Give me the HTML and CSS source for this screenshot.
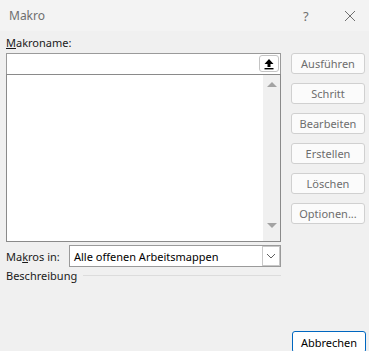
FILE: index.html
```html
<!DOCTYPE html>
<html lang="de">
	<head>
		<meta charset="UTF-8" />
		<title>Makro</title>
		<link rel="stylesheet" href="styles.css">
	</head>
	<body>
		<div class="dialog">
			<div class="titlebar">
				<span class="title">Makro</span>
				<span class="help">?</span>
				<span class="close">
					<svg width="12" height="12" viewBox="0 0 12 12"><path d="M1 1L11 11M11 1L1 11" stroke="#6f6f6f" stroke-width="1" fill="none"/></svg>
				</span>
			</div>
			<div class="main">
				<div class="left">
					<div class="label"><u>M</u>akroname:</div>
					<div class="namebox">
						<span class="pick">
							<svg width="12" height="12" viewBox="0 0 12 12"><path d="M6 1L10.5 6H7.5V9H4.5V6H1.5Z" fill="#000"/><rect x="1.5" y="10" width="9" height="1.4" fill="#000"/></svg>
						</span>
					</div>
					<div class="list">
						<div class="scroll">
							<span class="arr up"></span>
							<span class="arr down"></span>
						</div>
					</div>
					<div class="inrow">
						<span class="inlabel">Ma<u>k</u>ros in:</span>
						<div class="combo">
							<span class="value">Alle offenen Arbeitsmappen</span>
							<span class="drop">
								<svg width="10" height="6" viewBox="0 0 10 6"><path d="M1 1L5 5L9 1" stroke="#606060" stroke-width="1" fill="none"/></svg>
							</span>
						</div>
					</div>
					<div class="desc">
						<span>Beschreibung</span>
						<span class="rule"></span>
					</div>
				</div>
				<div class="buttons">
					<span class="btn">Ausführen</span>
					<span class="btn">Schritt</span>
					<span class="btn">Bearbeiten</span>
					<span class="btn">Erstellen</span>
					<span class="btn">Löschen</span>
					<span class="btn">Optionen...</span>
				</div>
			</div>
			<div class="footer">
				<span class="btn default">Abbrechen</span>
			</div>
		</div>
	</body>
</html>
```

FILE: styles.css
```css
body {
	margin: 0;
	background: #f0f0f0;
	font-family: "Noto Sans", sans-serif;
	font-size: 11px;
	color: #1a1a1a;
	overflow: hidden;
}
.dialog {
	height: 351px;
	display: flex;
	flex-direction: column;
}
.titlebar {
	height: 31px;
	display: flex;
	align-items: center;
	background: #f3f3f3;
	padding-left: 9px;
	color: #6f6f6f;
}
.title {
	flex: 1;
	font-size: 12px;
}
.help {
	width: 16px;
	margin-right: 25px;
	font-size: 13px;
}
.close {
	width: 12px;
	margin-right: 13px;
	display: flex;
}
.main {
	display: grid;
	grid-template-columns: 275px 74px;
	column-gap: 10px;
	padding-left: 6px;
}
.label {
	height: 22px;
	line-height: 24px;
}
.namebox {
	height: 19px;
	background: #fff;
	border: 1px solid #9a9a9a;
	border-bottom: none;
	display: flex;
	justify-content: flex-end;
	padding: 1px 1px 0 0;
}
.pick {
	width: 18px;
	height: 15px;
	border: 1px solid #c4c4c4;
	border-radius: 3px;
	background: #fff;
	display: flex;
	align-items: center;
	justify-content: center;
}
.list {
	height: 166px;
	border: 1px solid #8a8a8a;
	background: #fff;
	display: flex;
	justify-content: flex-end;
}
.scroll {
	width: 17px;
	background: #f0f0f0;
	display: flex;
	flex-direction: column;
	justify-content: space-between;
	align-items: center;
	padding: 7px 0 13px;
}
.arr {
	width: 0;
	height: 0;
	border-left: 5px solid transparent;
	border-right: 5px solid transparent;
}
.arr.up {
	border-bottom: 5px solid #a3a3a3;
}
.arr.down {
	border-top: 5px solid #a3a3a3;
}
.inrow {
	display: flex;
	align-items: center;
	margin-top: 3px;
	height: 22px;
}
.inlabel {
	width: 63px;
}
.combo {
	flex: 1;
	height: 20px;
	border: 1px solid #9a9a9a;
	background: #fff;
	display: flex;
	align-items: center;
	padding-left: 4px;
	color: #000;
}
.value {
	flex: 1;
}
.drop {
	width: 16px;
	height: 18px;
	border: 1px solid #c8c8c8;
	display: flex;
	align-items: center;
	justify-content: center;
}
.desc {
	display: flex;
	align-items: center;
	height: 17px;
}
.rule {
	flex: 1;
	height: 1px;
	background: #dcdcdc;
	margin-left: 6px;
}
.buttons {
	padding-top: 22px;
	display: flex;
	flex-direction: column;
	gap: 9px;
}
.btn {
	height: 19px;
	border: 1px solid #d0d0d0;
	border-radius: 3px;
	background: #fbfbfb;
	color: #6d6d6d;
	display: flex;
	align-items: center;
	justify-content: center;
}
.footer {
	margin-top: auto;
	display: flex;
	justify-content: flex-end;
	padding-right: 3px;
	height: 20px;
}
.btn.default {
	width: 72px;
	height: 20px;
	border-color: #0067c0;
	background: #fff;
	color: #000;
	flex: none;
}
```
